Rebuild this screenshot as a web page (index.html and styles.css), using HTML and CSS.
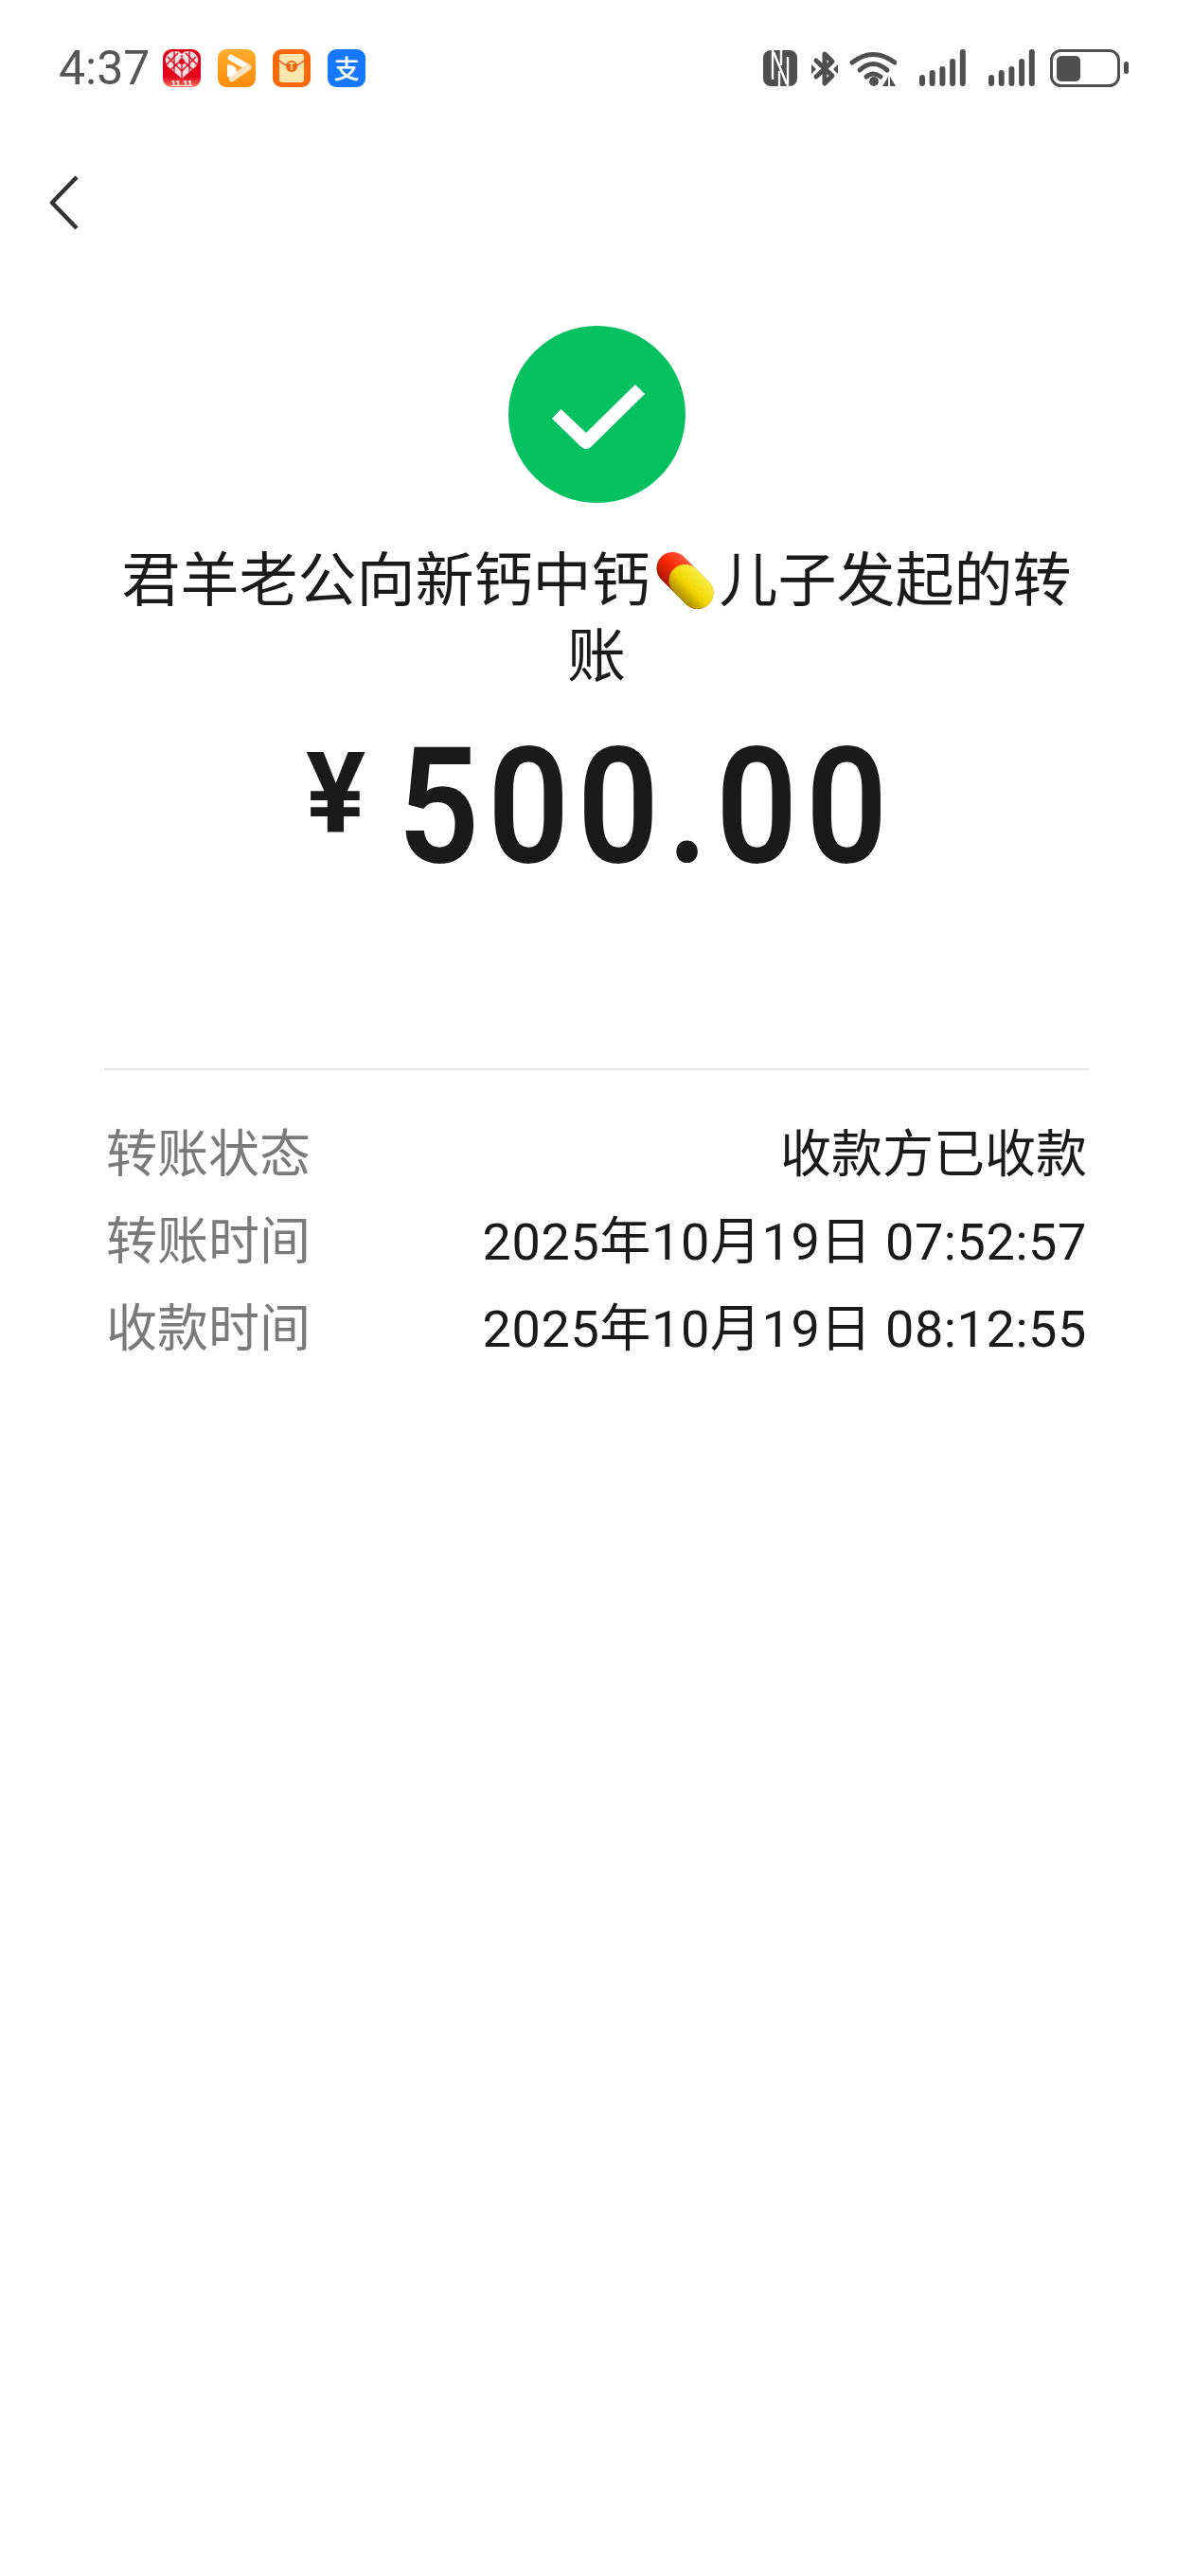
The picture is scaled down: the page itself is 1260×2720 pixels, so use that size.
FILE: index.html
```html
<!DOCTYPE html>
<html lang="zh-CN">
<head>
  <meta charset="UTF-8">
  <meta name="viewport" content="width=device-width, initial-scale=1.0">
  <title>转账详情</title>
  <link rel="stylesheet" href="styles.css">
</head>
<body>
  <div class="status-bar">
    <div class="status-left">
      <span class="clock">4:37</span>
      <div class="app-icons">
        <svg class="app-icon" viewBox="0 0 40 40">
          <defs>
            <linearGradient id="pddBg" x1="0" y1="0" x2="0" y2="1">
              <stop offset="0" stop-color="#e3001b"/>
              <stop offset="0.72" stop-color="#e3001b"/>
              <stop offset="1" stop-color="#fb7a5c"/>
            </linearGradient>
          </defs>
          <rect width="40" height="40" rx="9" fill="url(#pddBg)"/>
          <path d="M20 31 L5 18 Q1 12 4 7 Q8 2 13 2 Q18 2 20 5 Q22 2 27 2 Q32 2 36 7 Q39 12 35 18 Z" fill="#f7dfe0"/>
          <path d="M5 8 L20 23 L35 8 M12 2 L12 24 M28 2 L28 24 M4 16 L16 4 M36 16 L24 4 M20 6 V31 M8 22 L20 11 L32 22" stroke="#e3001b" stroke-width="1.3" fill="none"/>
          <circle cx="20" cy="13" r="3" fill="#e3001b"/>
          <text class="pdd-date" x="20" y="38.5" text-anchor="middle">11.11</text>
        </svg>
        <svg class="app-icon" viewBox="0 0 40 40">
          <defs>
            <linearGradient id="videoBg" x1="0" y1="0" x2="0" y2="1">
              <stop offset="0" stop-color="#ffad2e"/>
              <stop offset="1" stop-color="#f98a0c"/>
            </linearGradient>
          </defs>
          <rect width="40" height="40" rx="9" fill="url(#videoBg)"/>
          <path d="M14 9 L32 19" stroke="#fff" stroke-width="6.5" stroke-linecap="round"/>
          <path d="M32 19 L15 31" stroke="#fde3bd" stroke-width="6.5" stroke-linecap="round"/>
          <path d="M10 16 Q20 17 20 23 Q18 30 10 29 Z" fill="#fff"/>
        </svg>
        <svg class="app-icon" viewBox="0 0 40 40">
          <rect width="40" height="40" rx="9" fill="#fb6a09"/>
          <rect x="7" y="5" width="26" height="30" rx="3" fill="#fde7ac"/>
          <path d="M7 12 Q20 24 33 12" stroke="#e8531f" stroke-width="1.4" fill="none"/>
          <circle cx="20" cy="18" r="6" fill="#f2640c"/>
          <text class="packet-mark" x="20" y="21.5" text-anchor="middle">T</text>
        </svg>
        <svg class="app-icon" viewBox="0 0 40 40">
          <rect width="40" height="40" rx="9" fill="#1677ff"/>
          <text class="alipay-mark" x="20" y="31" text-anchor="middle">支</text>
        </svg>
      </div>
    </div>
    <div class="status-right">
      <svg class="ic-nfc" viewBox="0 0 36 38">
        <rect width="36" height="38" rx="8" fill="#4f4f4f"/>
        <path d="M10 0 V31 M26 7 V38 M11 2 L25 36 M17 38 V22 M19 0 V16" stroke="#fff" stroke-width="2.4" fill="none"/>
      </svg>
      <svg class="ic-bt" viewBox="0 0 28 39">
        <path d="M5 11 L22 27 L14 35 V4 L22 12 L5 28" stroke="#4f4f4f" stroke-width="5" fill="none" stroke-linejoin="round" stroke-linecap="round"/>
        <path d="M0 15 L5 20 L0 25 Z M28 15 L23 20 L28 25 Z" fill="#4f4f4f"/>
      </svg>
      <svg class="ic-wifi" viewBox="0 0 50 40">
        <g stroke="#4f4f4f" stroke-width="5" fill="none" stroke-linecap="round">
          <path d="M3 14 Q25 -3 48 14"/>
          <path d="M11 22 Q25 9 40 22"/>
          <path d="M18 29 Q25 23 33 29"/>
        </g>
        <circle cx="26" cy="34" r="5" fill="#4f4f4f"/>
        <path d="M41 29 V39 H35 Z M43 29 V39 H49 Z" fill="#4f4f4f"/>
      </svg>
      <svg class="ic-signal" viewBox="0 0 49 40">
        <g fill="#4f4f4f">
          <rect x="0" y="27" width="6" height="12" rx="3"/>
          <rect x="10.7" y="22" width="6" height="17" rx="3"/>
          <rect x="21.4" y="18" width="6" height="21" rx="3"/>
          <rect x="32.1" y="10" width="6" height="29" rx="3"/>
          <rect x="42.8" y="0" width="6" height="39" rx="3"/>
        </g>
      </svg>
      <svg class="ic-signal" viewBox="0 0 49 40">
        <g fill="#4f4f4f">
          <rect x="0" y="27" width="6" height="12" rx="3"/>
          <rect x="10.7" y="22" width="6" height="17" rx="3"/>
          <rect x="21.4" y="18" width="6" height="21" rx="3"/>
          <rect x="32.1" y="10" width="6" height="29" rx="3"/>
          <rect x="42.8" y="0" width="6" height="39" rx="3"/>
        </g>
      </svg>
      <svg class="ic-battery" viewBox="0 0 83 40">
        <rect x="1.5" y="1.5" width="71" height="37" rx="10" fill="none" stroke="#4f4f4f" stroke-width="3"/>
        <rect x="7" y="7" width="25" height="27" rx="5" fill="#4f4f4f"/>
        <rect x="78" y="13" width="5" height="13" rx="2.5" fill="#4f4f4f"/>
      </svg>
    </div>
  </div>

  <svg class="back" viewBox="0 0 32 58">
    <path d="M29 2 L3 29 L29 56" fill="none" stroke="#333" stroke-width="4.5" stroke-linejoin="round"/>
  </svg>

  <main class="transfer">
    <svg class="done-icon" viewBox="0 0 187 187">
      <circle cx="93.5" cy="93.5" r="93.5" fill="#07c160"/>
      <path d="M46 98 L55.5 88 L82 113 L134 62 L144 72 L87 128 Q82 132 77 128 Z" fill="#fff"/>
    </svg>
    <h1 class="title">君羊老公向新钙中钙<svg class="pill" viewBox="-6.5 0 73 63">
        <defs>
          <linearGradient id="pillRed" x1="0" y1="0" x2="0" y2="1">
            <stop offset="0" stop-color="#f8563a"/>
            <stop offset="0.45" stop-color="#f92a05"/>
            <stop offset="1" stop-color="#a81700"/>
          </linearGradient>
          <linearGradient id="pillYellow" x1="0" y1="0" x2="0" y2="1">
            <stop offset="0" stop-color="#f6ee44"/>
            <stop offset="0.55" stop-color="#f2d500"/>
            <stop offset="1" stop-color="#a88a00"/>
          </linearGradient>
        </defs>
        <g transform="rotate(45 30 31)">
          <rect x="-5.5" y="14" width="71" height="34" rx="17" fill="url(#pillRed)"/>
          <path d="M30 14 H48.5 A17 17 0 0 1 48.5 48 H30 A17 17 0 0 1 30 14 Z" fill="url(#pillYellow)"/>
        </g>
      </svg>儿子发起的转账</h1>
    <div class="amount">
      <span class="currency">¥</span>
      <span class="value">500.00</span>
    </div>
    <div class="details">
      <div class="detail-row">
        <span class="detail-label">转账状态</span>
        <span class="detail-value">收款方已收款</span>
      </div>
      <div class="detail-row">
        <span class="detail-label">转账时间</span>
        <span class="detail-value detail-date">2025年10月19日 07:52:57</span>
      </div>
      <div class="detail-row">
        <span class="detail-label">收款时间</span>
        <span class="detail-value detail-date">2025年10月19日 08:12:55</span>
      </div>
    </div>
  </main>
</body>
</html>
```

FILE: styles.css
```css
body {
  margin: 0;
  height: 2720px;
  background-color: #fff;
  font-family: Roboto, "Noto Sans CJK SC", sans-serif;
  color: #1a1a1a;
  overflow: hidden;
}

.status-bar {
  display: flex;
  justify-content: space-between;
  align-items: center;
  height: 40px;
  padding: 52px 68px 0 62px;
}

.status-left {
  display: flex;
  align-items: center;
}

.clock {
  font-size: 50px;
  line-height: 40px;
  color: #555;
}

.app-icons {
  display: flex;
  gap: 18px;
  margin-left: 14px;
}

.app-icon {
  width: 40px;
  height: 40px;
}

.pdd-date {
  font-family: "Liberation Sans", sans-serif;
  font-size: 9.5px;
  font-weight: 700;
  fill: #fff;
}

.packet-mark {
  font-family: "Liberation Sans", sans-serif;
  font-size: 10px;
  font-weight: 700;
  fill: #fde7ac;
}

.alipay-mark {
  font-family: "Noto Sans CJK SC", sans-serif;
  font-size: 27px;
  font-weight: 500;
  fill: #fff;
}

.status-right {
  display: flex;
  align-items: center;
}

.ic-nfc {
  width: 36px;
  height: 38px;
}

.ic-bt {
  width: 28px;
  height: 39px;
  margin-left: 15px;
}

.ic-wifi {
  width: 50px;
  height: 40px;
  margin-left: 12px;
}

.ic-signal {
  width: 49px;
  height: 40px;
  margin-left: 24px;
}

.ic-battery {
  width: 83px;
  height: 40px;
  margin-left: 16px;
}

.back {
  display: block;
  width: 32px;
  height: 58px;
  margin: 93px 0 0 52px;
}

.transfer {
  display: flex;
  flex-direction: column;
  align-items: center;
  padding: 0 110px;
  margin-top: 101px;
}

.done-icon {
  width: 187px;
  height: 187px;
}

.title {
  margin: 43px 0 0;
  font-size: 62px;
  font-weight: 400;
  line-height: 80px;
  text-align: center;
}

.pill {
  display: inline-block;
  width: 73px;
  height: 63px;
  vertical-align: -10px;
}

.amount {
  display: flex;
  align-items: flex-start;
  height: 124px;
  margin-top: 56px;
  padding-left: 10px;
}

.currency {
  font-size: 118px;
  font-weight: 700;
  line-height: 96px;
  margin-right: 34px;
}

/* digits in the shot are narrower than Roboto, so squeeze them and pull the box back in */
.value {
  font-size: 170px;
  font-weight: 600;
  line-height: 124px;
  letter-spacing: 9.5px;
  transform: scaleX(0.89);
  transform-origin: left;
  margin-right: -64px;
}

.details {
  width: 100%;
  margin-top: 214px;
  padding-top: 44px;
  border-top: 2px solid #e5e5e5;
}

.detail-row {
  display: flex;
  justify-content: space-between;
  padding: 0 2px;
  font-size: 54px;
  line-height: 92px;
}

.detail-label {
  color: #7a7a7a;
}

.detail-date {
  letter-spacing: 0.6px;
}
```
